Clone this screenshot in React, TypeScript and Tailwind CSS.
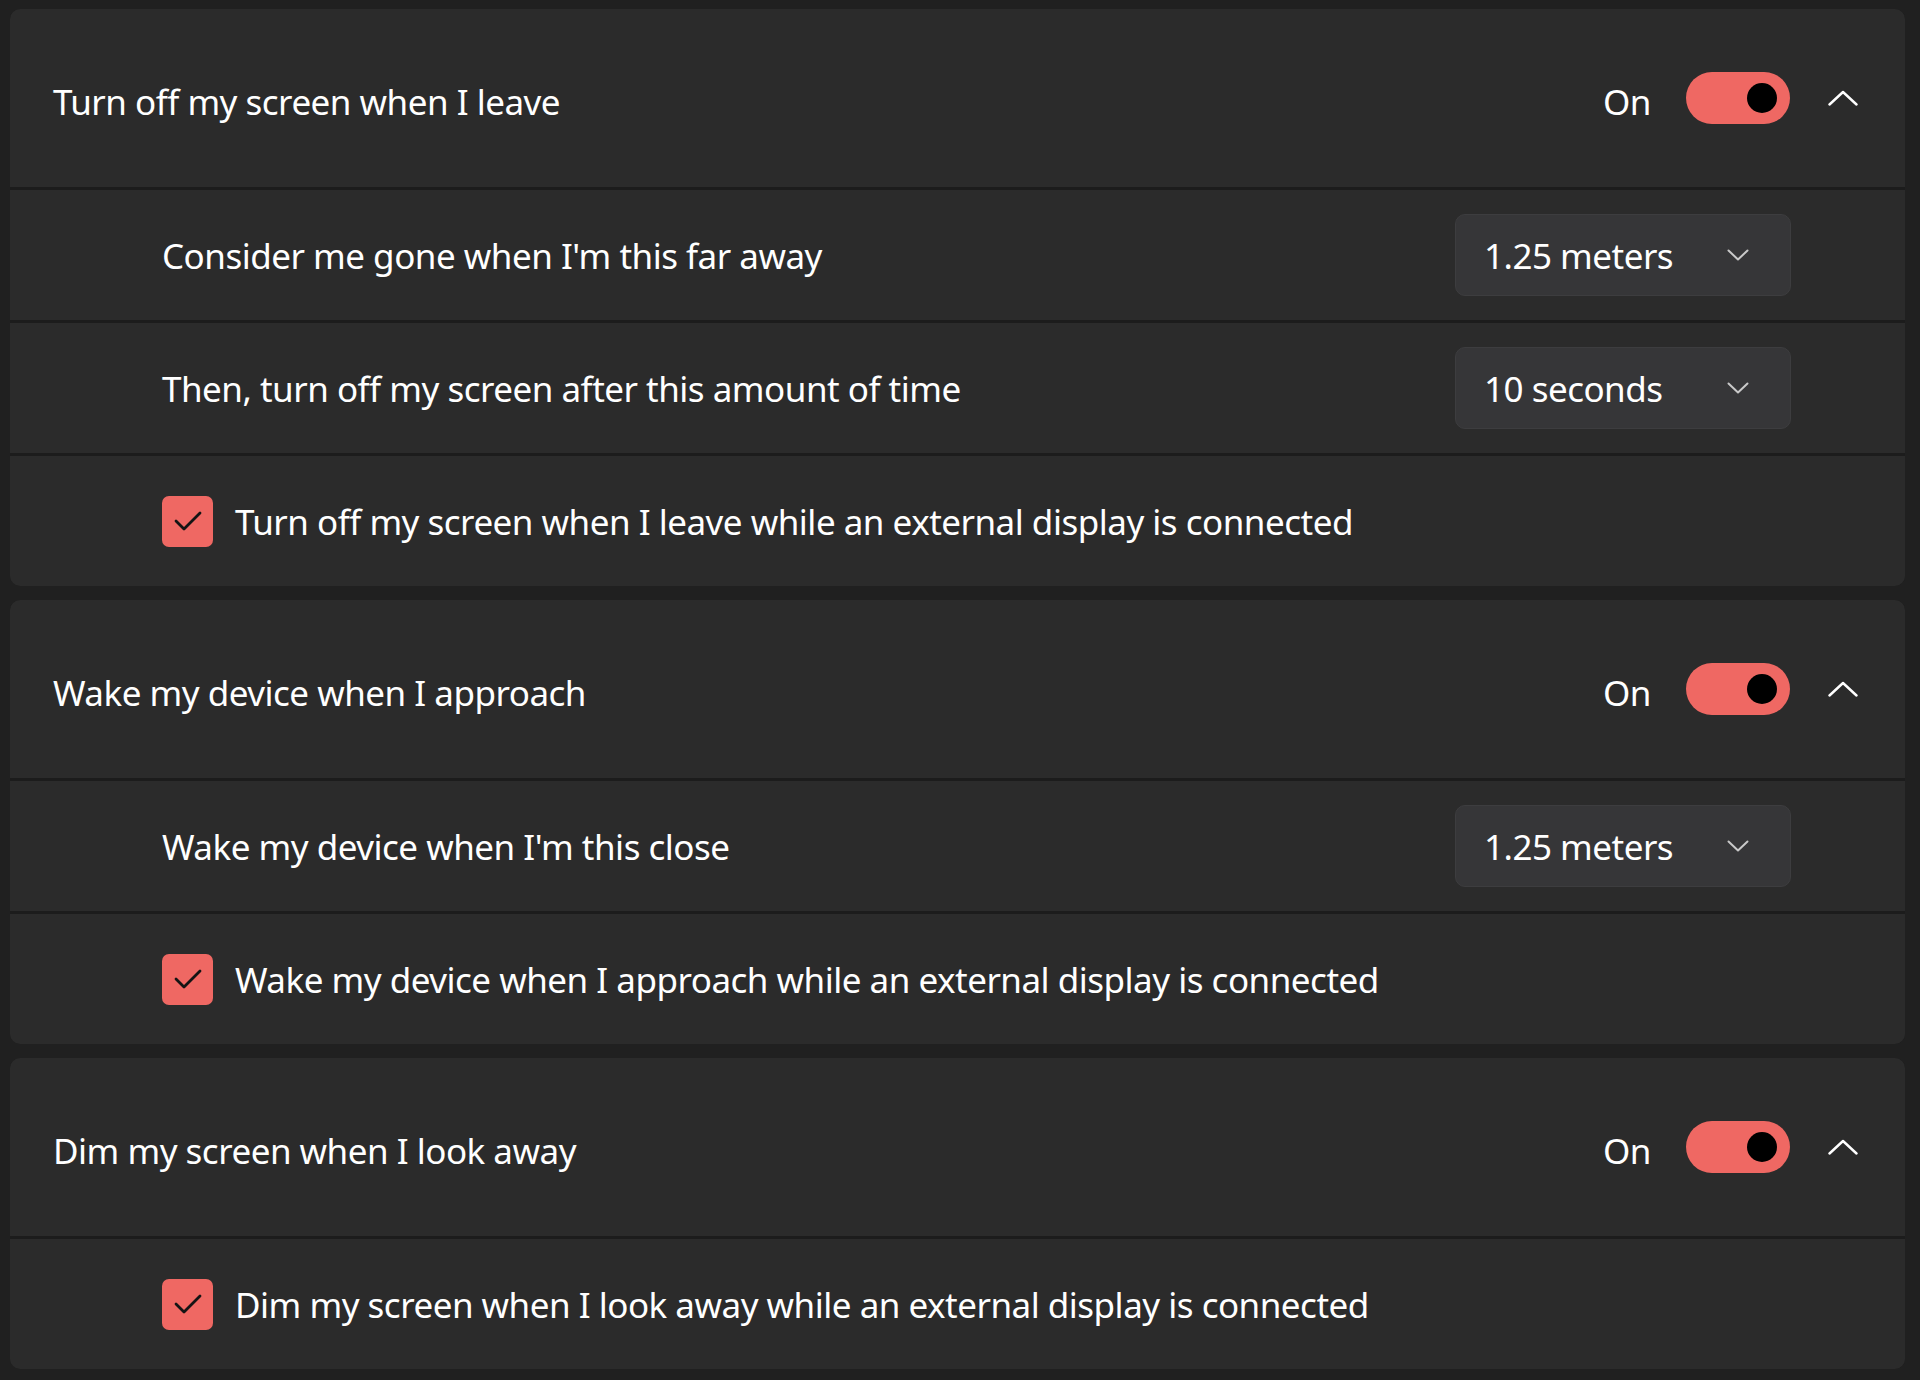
import React from "react";

const font = { fontFamily: '"Noto Sans", "Open Sans", sans-serif' };

function Toggle() {
  return (
    <div className="w-[104px] h-[52px] rounded-full bg-[#ef6863] flex items-center justify-end pr-[13px]">
      <div className="w-[30px] h-[30px] rounded-full bg-black" />
    </div>
  );
}

function ChevronUp() {
  return (
    <svg width="30" height="16" viewBox="0 0 30 16" fill="none">
      <path d="M1.5 14.5 L15 2 L28.5 14.5" stroke="#ffffff" strokeWidth="2.4" strokeLinecap="round" strokeLinejoin="round" />
    </svg>
  );
}

function ChevronDown() {
  return (
    <svg width="22" height="12" viewBox="0 0 22 12" fill="none">
      <path d="M1.5 1.5 L11 10.5 L20.5 1.5" stroke="#c9c9c9" strokeWidth="2" strokeLinecap="round" strokeLinejoin="round" />
    </svg>
  );
}

const txt = "text-[35px] tracking-[-0.5px] text-white leading-none";

function Header({ title }: { title: string }) {
  return (
    <div className="h-[178px] bg-[#2b2b2b] flex items-center pl-[43px] pr-[47px]">
      <span className={`${txt} pt-[7px]`}>{title}</span>
      <div className="ml-auto flex items-center">
        <span className={`${txt} pt-[7px] mr-[35px]`}>On</span>
        <Toggle />
        <div className="ml-[38px] flex items-center">
          <ChevronUp />
        </div>
      </div>
    </div>
  );
}

function DropRow({ label, value }: { label: string; value: string }) {
  return (
    <div className="h-[130px] bg-[#2b2b2b] flex items-center pl-[152px] pr-[114px]">
      <span className={txt}>{label}</span>
      <div className="ml-auto w-[336px] h-[82px] rounded-[10px] bg-[#363638] border border-[#3d3d3f] flex items-center pl-[28px] pr-[41px]">
        <span className={txt}>{value}</span>
        <div className="ml-auto flex items-center">
          <ChevronDown />
        </div>
      </div>
    </div>
  );
}

function CheckRow({ label }: { label: string }) {
  return (
    <div className="h-[130px] bg-[#2b2b2b] flex items-center pl-[152px]">
      <div className="w-[51px] h-[51px] rounded-[7px] bg-[#ef6863] flex items-center justify-center">
        <svg width="28" height="20" viewBox="0 0 28 20" fill="none">
          <path d="M2 10 L10 18 L26 2" stroke="#141414" strokeWidth="2.8" strokeLinecap="round" strokeLinejoin="round" />
        </svg>
      </div>
      <span className={`ml-[22px] ${txt}`}>{label}</span>
    </div>
  );
}

export default function App() {
  return (
    <div className="w-[1920px] h-[1380px] bg-[#202020] pt-[9px] pl-[10px] pr-[15px] flex flex-col gap-[14px]" style={font}>
      <div className="rounded-[10px] overflow-hidden bg-[#1c1c1c] flex flex-col gap-[3px]">
        <Header title="Turn off my screen when I leave" />
        <DropRow label="Consider me gone when I'm this far away" value="1.25 meters" />
        <DropRow label="Then, turn off my screen after this amount of time" value="10 seconds" />
        <CheckRow label="Turn off my screen when I leave while an external display is connected" />
      </div>
      <div className="rounded-[10px] overflow-hidden bg-[#1c1c1c] flex flex-col gap-[3px]">
        <Header title="Wake my device when I approach" />
        <DropRow label="Wake my device when I'm this close" value="1.25 meters" />
        <CheckRow label="Wake my device when I approach while an external display is connected" />
      </div>
      <div className="rounded-[10px] overflow-hidden bg-[#1c1c1c] flex flex-col gap-[3px]">
        <Header title="Dim my screen when I look away" />
        <CheckRow label="Dim my screen when I look away while an external display is connected" />
      </div>
    </div>
  );
}
